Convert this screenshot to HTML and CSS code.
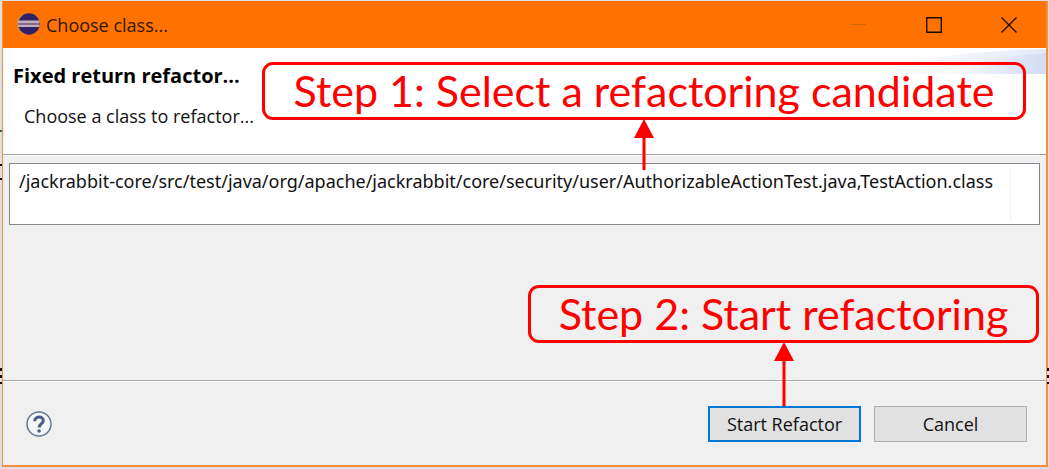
FILE: index.html
```
<!DOCTYPE html>
<html lang="en">
<head>
<meta charset="utf-8">
<title>Choose class...</title>
<link rel="stylesheet" href="styles.css">
</head>
<body>
<main class="dialog">
  <header class="titlebar">
    <svg class="logo" width="24" height="24" viewBox="0 0 24 24" aria-hidden="true">
      <circle cx="11" cy="11" r="10.500" fill="#d9853f"/>
      <circle cx="13" cy="11" r="10.700" fill="#2f2268"/>
      <path d="M2 8.800h21.500M2 12.800h21.500" stroke="#c4adb5" stroke-width="2.600"/>
      <path d="M2 10.800h21.500" stroke="#8b7391" stroke-width="1.400"/>
    </svg>
    <span class="title">Choose class...</span>
    <button class="winbtn" type="button" aria-label="Minimize" disabled><svg width="16" height="16" viewBox="0 0 16 16"><path d="M0 7.500h15" stroke="#d06410" fill="none"/></svg></button>
    <button class="winbtn" type="button" aria-label="Maximize"><svg width="16" height="16" viewBox="0 0 16 16"><path d="M.7.700h14.600v14.600H.7z" stroke="#1c0d00" stroke-width="1.400" fill="none"/></svg></button>
    <button class="winbtn" type="button" aria-label="Close"><svg width="16" height="16" viewBox="0 0 16 16"><path d="M.5.500l15 15M15.500.500l-15 15" stroke="#1c0d00" stroke-width="1.400" fill="none"/></svg></button>
  </header>
  <section class="banner">
    <svg class="swoosh" width="180" height="26" viewBox="0 0 180 26" aria-hidden="true">
      <defs><linearGradient id="g"><stop offset="0" stop-color="#fff"/><stop offset="1" stop-color="#d2dcf4"/></linearGradient></defs>
      <path d="M0 26C40 12 100 3 180 1v25z" fill="url(#g)" opacity=".6"/>
      <path d="M70 26C110 14 140 8 180 5v21z" fill="url(#g)"/>
    </svg>
    <h1 class="heading">Fixed return refactor...</h1>
    <p class="hint">Choose a class to refactor...</p>
  </section>
  <section class="content">
    <div class="list">
      <table class="classes"><tbody><tr><td class="path">/jackrabbit-core/src/test/java/org/apache/jackrabbit/core/security/user/AuthorizableActionTest.java,TestAction.class</td><td></td></tr></tbody></table>
    </div>
  </section>
  <footer class="footer">
    <button class="help" type="button" aria-label="Help">
      <svg width="28" height="28" viewBox="0 0 28 28"><circle cx="14" cy="14" r="12" fill="#f5f6f8" stroke="#647799" stroke-width="1.500"/><path d="M9.700 11.200C9.700 5.800 18.300 5.800 18.300 10.600C18.300 13.800 14.200 13.700 14.200 17.600" fill="none" stroke="#485d87" stroke-width="3"/><circle cx="14.100" cy="21" r="1.800" fill="#485d87"/></svg>
    </button>
    <button class="btn primary" type="button">Start Refactor</button>
    <button class="btn" type="button">Cancel</button>
  </footer>
  <div class="callout step1">Step 1: Select a refactoring candidate
    <svg class="arrow" width="20" height="51" viewBox="0 0 20 51" aria-hidden="true"><path d="M10 0l10 19h-8.500v32h-3V19H0z" fill="#f00"/></svg>
  </div>
  <div class="callout step2">Step 2: Start refactoring
    <svg class="arrow" width="20" height="64" viewBox="0 0 20 64" aria-hidden="true"><path d="M10 0l10 19h-8.500v45h-3V19H0z" fill="#f00"/></svg>
  </div>
</main>
<i class="mark m1"></i><i class="mark m2"></i><i class="mark m3"></i><i class="mark m4"></i><i class="mark m4 right"></i>
</body>
</html>
```
FILE: styles.css
```
* { box-sizing: border-box; }
body {
  position: relative;
  margin: 0;
  padding: 1px 1px 2px 2px;
  min-height: 100vh;
  display: flex;
  background: #dce0e4;
  color: #111;
  font: 18px/24px "Open Sans", "Noto Sans", sans-serif;
}
button { font: inherit; color: inherit; padding: 0; }
.dialog {
  position: relative;
  flex: 1;
  min-width: 0;
  display: flex;
  flex-direction: column;
  background: #f0f0f0;
  border: solid #ff8c38;
  border-width: 0 2px 2px 1px;
}
.titlebar {
  display: flex;
  align-items: center;
  height: 47px;
  padding-left: 13px;
  background: #ff7200;
}
.logo { margin-right: 6px; }
.title { flex: 1; color: #301800; }
.winbtn {
  display: grid;
  place-items: center;
  width: 75px;
  height: 47px;
  border: 0;
  background: none;
}
.banner {
  position: relative;
  height: 107px;
  padding: 16px 10px;
  background: #fff;
  border-bottom: 1px solid #a0a0a0;
}
.swoosh { position: absolute; top: 0; right: 0; }
.heading { margin: 0; font-size: 20px; line-height: 24px; color: #000; }
.hint { margin: 16px 11px 0; }
.content {
  flex: 1;
  padding: 7px 6px 0;
  border-top: 1px solid #fff;
}
.list {
  height: 62px;
  padding: 3px 0;
  background: #fff;
  border: 1px solid #828790;
}
.classes { width: 100%; height: 54px; border-collapse: collapse; }
.classes td { padding: 0; vertical-align: top; }
.classes .path {
  width: 1000px;
  padding: 2px 0 0 9px;
  border-right: 1px solid #eef3fa;
  font-family: "Noto Sans", sans-serif;
  white-space: nowrap;
}
.footer {
  display: flex;
  align-items: center;
  gap: 13px;
  height: 85px;
  padding: 2px 19px 0 22px;
  border-top: 1px solid #a8a8a8;
  box-shadow: inset 0 1px #fff;
}
.help {
  width: 28px;
  height: 28px;
  margin-right: auto;
  border: 0;
  background: none;
}
.btn {
  width: 153px;
  height: 36px;
  background: #e1e1e1;
  border: 1px solid #adadad;
}
.btn.primary { border: 2px solid #0078d7; }
.callout {
  position: absolute;
  height: 58px;
  border: 3px solid #f00;
  border-radius: 11px;
  color: #f00;
  font: 43px/52px Lato, sans-serif;
  text-align: center;
  white-space: nowrap;
}
.step1 { top: 61px; right: 20px; width: 764px; }
.step2 { top: 284px; right: 7px; width: 511px; }
.arrow { position: absolute; top: 54px; left: 50%; margin-left: -10px; }
.mark { position: absolute; left: 0; width: 2px; height: 2px; background: #111; }
.m1 { top: 130px; background: #2c6a3c; }
.m2 { top: 164px; }
.m3 { top: 178px; }
.m4 { top: 368px; height: 16px; background: repeating-linear-gradient(#111 0 3px, #dce0e4 3px 7px); }
.right { left: auto; right: 0; }
```
